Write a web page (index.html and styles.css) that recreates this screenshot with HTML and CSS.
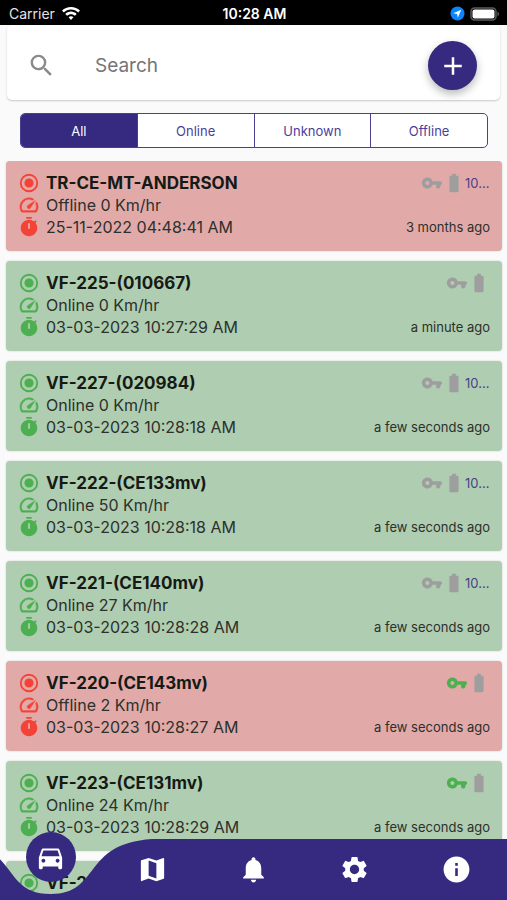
FILE: index.html
```
<!DOCTYPE html>
<html lang="en">
<head>
<meta charset="utf-8">
<meta name="viewport" content="width=device-width, initial-scale=1">
<title>Vehicles</title>
<link rel="stylesheet" href="styles.css">
</head>
<body>
<svg class="sprite" aria-hidden="true">
  <symbol id="radio" viewBox="0 0 24 24"><path d="M12 7a5 5 0 1 0 0 10 5 5 0 0 0 0-10zm0-5a10 10 0 1 0 0 20 10 10 0 0 0 0-20zm0 18a8 8 0 1 1 0-16 8 8 0 0 1 0 16z"/></symbol>
  <symbol id="speed" viewBox="0 0 24 24"><path stroke="currentColor" stroke-width=".4" d="M20.38 8.57l-1.23 1.85a8 8 0 0 1-.22 7.58H5.07A8 8 0 0 1 15.58 6.85l1.85-1.23A10 10 0 0 0 3.35 19a2 2 0 0 0 1.72 1h13.85a2 2 0 0 0 1.74-1 10 10 0 0 0-.27-10.44zm-9.79 6.84a2 2 0 0 0 2.83 0l5.66-8.49-8.49 5.66a2 2 0 0 0 0 2.83z"/></symbol>
  <symbol id="timer" viewBox="0 0 24 24"><path d="M9 1h6v2H9zm10.03 6.39l1.42-1.42c-.43-.51-.9-.99-1.41-1.41l-1.42 1.42A8.96 8.96 0 0 0 12 4c-4.97 0-9 4.03-9 9s4.02 9 9 9 9-4.03 9-9c0-2.12-.74-4.07-1.97-5.61zM13 14h-2V8h2v6z"/></symbol>
  <symbol id="key" viewBox="0 0 24 24"><path d="M12.65 10A5.99 5.99 0 0 0 7 6c-3.31 0-6 2.69-6 6s2.690 6 6 6a5.99 5.99 0 0 0 5.650-4H16.500v2.200q0 1.800 1.800 1.800h.7q1.500 0 1.900-1.500l.7-2.500q1.400-.4 1.400-2 0-2-2-2H12.650zM7 14.200c-1.200 0-2.200-1-2.200-2.200S5.800 9.800 7 9.800s2.200 1 2.200 2.200-1 2.200-2.200 2.200z"/></symbol>
  <symbol id="battery" viewBox="0 0 24 24"><path d="M15.67 4H14V2h-4v2H8.33C7.6 4 7 4.6 7 5.33v15.33C7 21.4 7.6 22 8.33 22h7.33c.74 0 1.34-.6 1.34-1.33V5.33C17 4.6 16.4 4 15.67 4z"/></symbol>
</svg>
<div class="app">
  <div class="status">
    <div class="carrier"><span>Carrier</span>
      <svg class="wifi" viewBox="0 0 18 14"><path d="M9 0C5.500 0 2.400 1.300 0 3.600l1.800 1.900C3.700 3.700 6.200 2.600 9 2.600s5.300 1.100 7.200 2.900L18 3.600C15.600 1.300 12.500 0 9 0zM9 4.600c-2.200 0-4.200.9-5.700 2.300l1.800 1.900C6.100 7.800 7.500 7.200 9 7.200s2.900.6 3.900 1.600l1.800-1.900C13.200 5.500 11.200 4.600 9 4.600zM9 9.200c-.9 0-1.800.4-2.400 1L9 13l2.400-2.800c-.6-.6-1.500-1-2.400-1z"/></svg>
    </div>
    <div class="clock">10:28 AM</div>
    <div class="indicators">
      <svg class="location" viewBox="0 0 16 16"><circle cx="8" cy="8" r="7.500" fill="#0a84ff"/><path d="M12 4L3.500 7.700l4 .8.8 4z" fill="#fff"/></svg>
      <svg class="power" viewBox="0 0 30 14"><rect x="1" y="1" width="25" height="12" rx="3.500" fill="none" stroke="#5c5c5c" stroke-width="1.500"/><rect x="2.500" y="2.500" width="22" height="9" rx="2" fill="#fff"/><path d="M27.500 4.800c2 .6 2 3.800 0 4.400z" fill="#5c5c5c"/></svg>
    </div>
  </div>

  <form class="search" role="search">
    <label class="search-icon" for="q" aria-label="Search"><svg viewBox="0 0 24 24"><path d="M15.500 14h-.79l-.28-.27A6.470 6.470 0 0 0 16 9.500 6.500 6.500 0 1 0 9.500 16c1.610 0 3.090-.59 4.230-1.570l.27.28v.79l5 4.990L20.490 19l-4.990-5zm-6 0C7.010 14 5 11.990 5 9.500S7.010 5 9.500 5 14 7.010 14 9.500 11.990 14 9.500 14z"/></svg></label>
    <input id="q" type="text" placeholder="Search">
    <button class="add" type="button" aria-label="Add vehicle"><svg viewBox="0 0 24 24"><path d="M19 13h-6v6h-2v-6H5v-2h6V5h2v6h6v2z"/></svg></button>
  </form>

  <div class="tabs">
    <button class="tab active" type="button">All</button>
    <button class="tab" type="button">Online</button>
    <button class="tab" type="button">Unknown</button>
    <button class="tab" type="button">Offline</button>
  </div>

  <main class="list" id="list"></main>

  <nav class="nav">
    <svg class="nav-shape" viewBox="0 0 507 61" preserveAspectRatio="none"><path d="M-50.700 0C20.300 4.600 0 55 50.700 55S81.100 4.600 152.100 0H507V61H-50.700z"/></svg>
    <a class="nav-item current" href="#list" aria-label="Vehicles"><span class="bubble"><svg viewBox="0 0 24 24"><path d="M18.920 6.010C18.720 5.420 18.160 5 17.500 5h-11c-.66 0-1.210.42-1.420 1.010L3 12v8c0 .55.45 1 1 1h1c.55 0 1-.45 1-1v-1h12v1c0 .55.45 1 1 1h1c.55 0 1-.45 1-1v-8l-2.080-5.990zM6.500 16c-.83 0-1.500-.67-1.500-1.500S5.670 13 6.500 13s1.500.67 1.500 1.500S7.330 16 6.500 16zm11 0c-.83 0-1.500-.67-1.500-1.500s.67-1.500 1.500-1.500 1.500.67 1.500 1.500-.67 1.500-1.500 1.500zM5 11l1.500-4.500h11L19 11H5z"/></svg></span></a>
    <a class="nav-item" href="#map" aria-label="Map"><svg viewBox="0 0 24 24"><path d="M20.500 3l-.16.03L15 5.100 9 3 3.360 4.900c-.21.07-.36.25-.36.48V20.500c0 .28.22.5.5.5l.16-.03L9 18.900l6 2.100 5.640-1.900c.21-.07.36-.25.36-.48V3.500c0-.28-.22-.5-.5-.5zM15 19l-6-2.110V5l6 2.110V19z"/></svg></a>
    <a class="nav-item" href="#alerts" aria-label="Alerts"><svg viewBox="0 0 24 24"><path d="M12 22c1.100 0 2-.9 2-2h-4c0 1.100.89 2 2 2zm6-6v-5c0-3.070-1.640-5.640-4.500-6.320V4c0-.83-.67-1.500-1.500-1.500s-1.500.67-1.500 1.500v.68C7.630 5.360 6 7.920 6 11v5l-2 2v1h16v-1l-2-2z"/></svg></a>
    <a class="nav-item" href="#settings" aria-label="Settings"><svg viewBox="0 0 24 24"><path d="M19.140 12.940c.04-.3.060-.61.060-.94 0-.32-.02-.64-.07-.94l2.030-1.580c.18-.14.23-.41.12-.61l-1.920-3.320c-.12-.22-.37-.29-.59-.22l-2.390.96c-.5-.38-1.030-.7-1.620-.94l-.36-2.540c-.04-.24-.24-.41-.48-.41h-3.840c-.24 0-.43.17-.47.41l-.36 2.540c-.59.24-1.130.57-1.620.94l-2.390-.96c-.22-.08-.47 0-.59.22L2.740 8.870c-.12.21-.08.47.12.61l2.030 1.580c-.05.3-.09.63-.09.94s.02.64.07.94l-2.030 1.580c-.18.14-.23.41-.12.61l1.920 3.320c.12.22.37.29.59.22l2.390-.96c.5.38 1.030.7 1.620.94l.36 2.540c.05.24.24.41.48.41h3.840c.24 0 .44-.17.47-.41l.36-2.540c.59-.24 1.130-.56 1.620-.94l2.390.96c.22.08.47 0 .59-.22l1.920-3.320c.12-.22.07-.47-.12-.61l-2.010-1.580zM12 15.600c-1.980 0-3.600-1.620-3.600-3.600s1.620-3.600 3.600-3.600 3.600 1.620 3.600 3.600-1.620 3.600-3.600 3.600z"/></svg></a>
    <a class="nav-item" href="#info" aria-label="Info"><svg viewBox="0 0 24 24"><path d="M12 2C6.480 2 2 6.480 2 12s4.480 10 10 10 10-4.480 10-10S17.520 2 12 2zm1 15h-2v-6h2v6zm0-8h-2V7h2v2z"/></svg></a>
  </nav>
</div>
<script src="app.js"></script>
</body>
</html>
```
FILE: styles.css
```
* { box-sizing: border-box; }

body {
  margin: 0;
  background: #fafafa;
  font-family: Inter, "Liberation Sans", sans-serif;
  color: #20201e;
}

svg { display: block; fill: currentColor; }
.sprite { display: none; }
button { font-family: inherit; border: 0; padding: 0; cursor: pointer; }

.app {
  position: relative;
  display: flex;
  flex-direction: column;
  height: 100vh;
  overflow: hidden;
}

.status {
  display: grid;
  grid-template-columns: 1fr auto 1fr;
  align-items: center;
  flex: none;
  height: 25px;
  padding: 2px 7px 0 9px;
  background: #000;
  color: #fff;
  font-size: 14px;
}
.carrier { display: flex; align-items: center; gap: 7px; color: #e4e4e4; }
.wifi { width: 18px; height: 14px; color: #fff; }
.clock { font-weight: 600; }
.indicators { display: flex; align-items: center; justify-content: flex-end; gap: 5px; }
.location { width: 15px; height: 15px; }
.power { width: 30px; height: 14px; }

.search {
  display: flex;
  align-items: center;
  flex: none;
  height: 75px;
  margin: 0 7px;
  padding: 6px 23px 0 20px;
  background: #fff;
  border-radius: 5px;
  box-shadow: 0 1px 2px rgba(0, 0, 0, 0.2);
}
.search-icon { color: #8a8a8a; }
.search-icon svg { width: 29px; height: 29px; }
.search input {
  flex: 1;
  min-width: 0;
  margin-left: 39px;
  padding: 0;
  border: 0;
  outline: 0;
  background: none;
  font-family: inherit;
  font-size: 19px;
}
.search input::placeholder { color: #757575; opacity: 1; }
.add {
  display: grid;
  place-items: center;
  width: 49px;
  height: 49px;
  border-radius: 50%;
  background: #352a80;
  color: #fff;
  box-shadow: 0 4px 8px rgba(0, 0, 0, 0.28);
}
.add svg { width: 30px; height: 30px; }

.tabs {
  display: flex;
  flex: none;
  height: 35px;
  margin: 13px 19px 13px 20px;
  border: 1px solid #4a4090;
  border-radius: 5px;
  background: #fff;
  overflow: hidden;
}
.tab { flex: 1; background: none; color: #4b3f9c; font-size: 13px; }
.tab + .tab { border-left: 1px solid #4a4090; }
.tab.active { background: #352a80; color: #fff; }

.list {
  display: flex;
  flex-direction: column;
  flex: 1;
  min-height: 0;
  gap: 10px;
  padding: 0 5px 0 6px;
  overflow: hidden;
}
.card {
  flex: none;
  min-height: 90px;
  padding: 11px 12px 13px;
  border-radius: 4px;
  box-shadow: 0 0 2px rgba(0, 0, 0, 0.2);
}
.card.online { background: #afcdb1; --state: #4caf50; }
.card.offline { background: #e1aaa9; --state: #f44336; }
.row { display: flex; align-items: center; height: 22px; font-size: 16px; color: #2d302b; }
.row svg { width: 22px; height: 22px; flex: none; }
.row .lead { margin-right: 6px; color: var(--state); }
.row .main { flex: 1; white-space: nowrap; }
.name { font-size: 17px; font-weight: 700; color: #161a14; }
.key, .battery { color: #9e9e9e; }
.key.on { color: #4caf50; }
.percent { width: 25px; font-size: 13px; color: #4b3f8c; }
.ago { font-size: 13px; }

.nav {
  position: absolute;
  inset: auto 0 0;
  display: flex;
  height: 61px;
  color: #fff;
}
.nav-shape { position: absolute; inset: 0; width: 100%; height: 100%; color: #352a80; }
.nav-item { position: relative; display: grid; place-items: center; flex: 1; color: inherit; }
.nav-item svg { width: 31px; height: 31px; }
.current { align-items: start; }
.bubble {
  display: grid;
  place-items: center;
  width: 50px;
  height: 50px;
  margin-top: -7px;
  border-radius: 50%;
  background: #352a80;
}
```
FILE: app.js
```
const vehicles = [
  { name: "TR-CE-MT-ANDERSON", state: "Offline", speed: 0, time: "25-11-2022 04:48:41 AM", ago: "3 months ago", charge: "10..." },
  { name: "VF-225-(010667)", state: "Online", speed: 0, time: "03-03-2023 10:27:29 AM", ago: "a minute ago" },
  { name: "VF-227-(020984)", state: "Online", speed: 0, time: "03-03-2023 10:28:18 AM", ago: "a few seconds ago", charge: "10..." },
  { name: "VF-222-(CE133mv)", state: "Online", speed: 50, time: "03-03-2023 10:28:18 AM", ago: "a few seconds ago", charge: "10..." },
  { name: "VF-221-(CE140mv)", state: "Online", speed: 27, time: "03-03-2023 10:28:28 AM", ago: "a few seconds ago", charge: "10..." },
  { name: "VF-220-(CE143mv)", state: "Offline", speed: 2, time: "03-03-2023 10:28:27 AM", ago: "a few seconds ago", key: true },
  { name: "VF-223-(CE131mv)", state: "Online", speed: 24, time: "03-03-2023 10:28:29 AM", ago: "a few seconds ago", key: true },
  { name: "VF-2", state: "Online" }
];

const icon = (id, cls) => `<svg class="${cls}" aria-hidden="true"><use href="#${id}"/></svg>`;

const details = v => v.time ? `
    <div class="row">${icon("speed", "lead")}<span class="main">${v.state} ${v.speed} Km/hr</span></div>
    <div class="row">${icon("timer", "lead")}<span class="main">${v.time}</span><span class="ago">${v.ago}</span></div>` : "";

document.getElementById("list").innerHTML = vehicles.map(v => `
  <article class="card ${v.state.toLowerCase()}">
    <div class="row">${icon("radio", "lead")}<span class="main name">${v.name}</span>${icon("key", v.key ? "key on" : "key")}${icon("battery", "battery")}${v.charge ? `<span class="percent">${v.charge}</span>` : ""}</div>${details(v)}
  </article>`).join("");
```
